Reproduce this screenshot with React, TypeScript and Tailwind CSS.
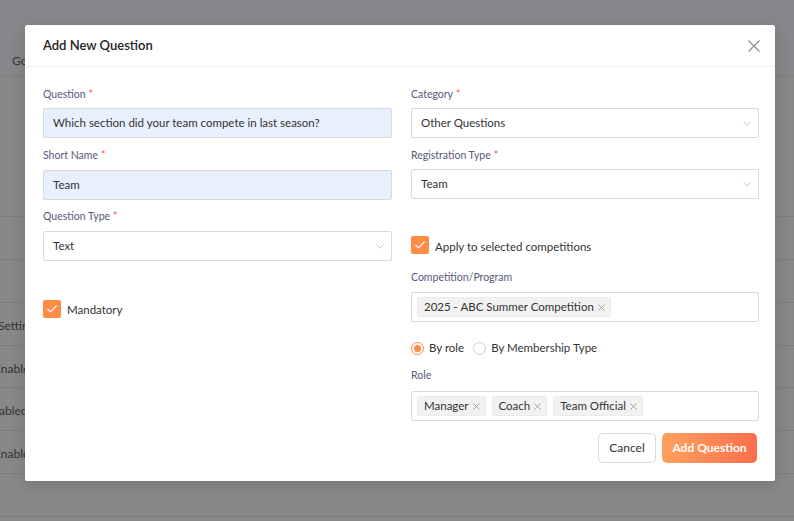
import React from "react";

const font = { fontFamily: 'Lato, "Liberation Sans", sans-serif' };

function Label({ text, req }: { text: string; req?: boolean }) {
  return (
    <div className="h-[14px] text-[10.5px] leading-[14px] text-[#58587a]">
      {text}
      {req && <span className="text-[#ff4d4f] ml-[3px]">*</span>}
    </div>
  );
}

function Chevron() {
  return (
    <svg width="8" height="5" viewBox="0 0 8 5" className="shrink-0">
      <path d="M0.5 0.5 L4 4.2 L7.5 0.5" fill="none" stroke="#c8c8c8" strokeWidth="1" />
    </svg>
  );
}

function Select({ value }: { value: string }) {
  return (
    <div className="h-[30px] border border-[#d9d9d9] rounded-[2px] bg-white flex items-center justify-between pl-[9px] pr-[7px] text-[11.5px] text-[#333]">
      <span>{value}</span>
      <Chevron />
    </div>
  );
}

function Input({ value }: { value: string }) {
  return (
    <div className="h-[30px] border border-[#d9d9d9] rounded-[2px] bg-[#e8f0fe] flex items-center pl-[9px] text-[11.5px] text-[#333]">
      {value}
    </div>
  );
}

function Tag({ text }: { text: string }) {
  return (
    <div className="h-[20px] bg-[#f2f2f2] border border-[#ebebeb] rounded-[2px] flex items-center pl-[6px] pr-[5px] text-[11.5px] text-[#333] gap-[4px]">
      <span>{text}</span>
      <svg width="7" height="7" viewBox="0 0 7 7">
        <path d="M0.5 0.5 L6.5 6.5 M6.5 0.5 L0.5 6.5" stroke="#a0a0a0" strokeWidth="1" />
      </svg>
    </div>
  );
}

function Check() {
  return (
    <div className="w-[18px] h-[18px] bg-[#ff8b47] rounded-[2px] flex items-center justify-center shrink-0">
      <svg width="12" height="10" viewBox="0 0 12 10">
        <path d="M1.5 5 L4.5 8 L10.5 1.5" fill="none" stroke="white" strokeWidth="1.2" />
      </svg>
    </div>
  );
}

function Background() {
  const rows = [216, 259, 302, 345, 387, 430, 473, 516];
  return (
    <div className="absolute inset-0 bg-[#888888] text-[12px] text-[#333]">
      <div className="h-[77px] bg-[#86878a] border-b border-[#7e7e7e] relative">
        <span className="absolute left-[12px] top-[52px]">Go</span>
      </div>
      {rows.map((y) => (
        <div key={y} className="absolute left-0 right-0 h-px bg-[#7d7d7d]" style={{ top: y }} />
      ))}
      <span className="absolute left-[-2px] top-[317px]">Settings</span>
      <span className="absolute left-[-6px] top-[360px]">Enabled</span>
      <span className="absolute left-[-1px] top-[402px]">abled</span>
      <span className="absolute left-[-6px] top-[445px]">Enable</span>
    </div>
  );
}

export default function App() {
  return (
    <div className="relative w-[794px] h-[521px] overflow-hidden" style={font}>
      <Background />
      <div className="absolute left-[25px] top-[25px] w-[750px] h-[456px] bg-white rounded-[2px] shadow-[0_4px_16px_rgba(0,0,0,0.15)] flex flex-col">
        <div className="h-[42px] border-b border-[#eeeeee] flex items-center justify-between pl-[18px] pr-[15px]">
          <div className="text-[13px] text-[#222] font-semibold">Add New Question</div>
          <svg width="12" height="12" viewBox="0 0 12 12">
            <path d="M0.5 0.5 L11.5 11.5 M11.5 0.5 L0.5 11.5" stroke="#8c8c8c" strokeWidth="1.1" />
          </svg>
        </div>
        <div className="flex pl-[18px] pr-[16px] pt-[20px] gap-[19px]">
          <div className="w-[349px] flex flex-col">
            <Label text="Question" req />
            <div className="mt-[7px]"><Input value="Which section did your team compete in last season?" /></div>
            <div className="mt-[10px]"><Label text="Short Name" req /></div>
            <div className="mt-[8px]"><Input value="Team" /></div>
            <div className="mt-[9px]"><Label text="Question Type" req /></div>
            <div className="mt-[8px]"><Select value="Text" /></div>
            <div className="mt-[39px] h-[18px] flex items-center gap-[6px] text-[11.5px] text-[#333]">
              <Check />
              <span className="pt-[2px]">Mandatory</span>
            </div>
          </div>
          <div className="w-[348px] flex flex-col">
            <Label text="Category" req />
            <div className="mt-[7px]"><Select value="Other Questions" /></div>
            <div className="mt-[10px]"><Label text="Registration Type" req /></div>
            <div className="mt-[7px]"><Select value="Team" /></div>
            <div className="mt-[37px] h-[18px] flex items-center gap-[6px] text-[11.5px] text-[#333]">
              <Check />
              <span className="pt-[4px]">Apply to selected competitions</span>
            </div>
            <div className="mt-[16px]"><Label text="Competition/Program" /></div>
            <div className="mt-[8px] h-[30px] border border-[#d9d9d9] rounded-[2px] flex items-center pl-[5px]">
              <Tag text="2025 - ABC Summer Competition" />
            </div>
            <div className="mt-[18px] h-[16px] flex items-center text-[11.5px] text-[#333]">
              <div className="w-[13px] h-[13px] rounded-full border border-[#ff8b47] flex items-center justify-center">
                <div className="w-[7px] h-[7px] rounded-full bg-[#ff8b47]" />
              </div>
              <span className="ml-[5px]">By role</span>
              <div className="ml-[9px] w-[13px] h-[13px] rounded-full border border-[#d0d0d0]" />
              <span className="ml-[5px]">By Membership Type</span>
            </div>
            <div className="mt-[12px]"><Label text="Role" /></div>
            <div className="mt-[9px] h-[30px] border border-[#d9d9d9] rounded-[2px] flex items-center pl-[5px] gap-[6px]">
              <Tag text="Manager" />
              <Tag text="Coach" />
              <Tag text="Team Official" />
            </div>
            <div className="mt-[12px] flex justify-end gap-[6px] pr-[2px]">
              <div className="h-[30px] w-[58px] border border-[#d9d9d9] rounded-[5px] flex items-center justify-center text-[12px] text-[#333] bg-white">
                Cancel
              </div>
              <div className="h-[30px] w-[95px] rounded-[5px] flex items-center justify-center text-[12px] text-white font-bold bg-gradient-to-r from-[#ffa05e] to-[#ff6d4b]">
                Add Question
              </div>
            </div>
          </div>
        </div>
      </div>
    </div>
  );
}
